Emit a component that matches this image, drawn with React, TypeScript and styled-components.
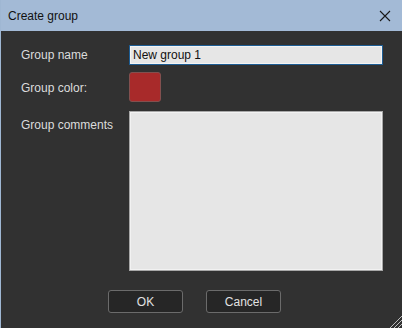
import styled, { createGlobalStyle } from "styled-components";

const Global = createGlobalStyle`
  html, body {
    margin: 0;
    padding: 0;
    background: #313131;
  }
  body {
    font-family: "Liberation Sans", "Noto Sans", sans-serif;
    font-size: 12px;
  }
`;

const Window = styled.div`
  width: 402px;
  height: 328px;
  display: flex;
  flex-direction: column;
  background-color: #313131;
  border-left: 1px solid #9fb7d3;
  box-sizing: border-box;
  position: relative;
  overflow: hidden;
`;

const TitleBar = styled.div`
  height: 31px;
  background-color: #a3bad6;
  display: flex;
  align-items: center;
  justify-content: space-between;
  padding: 0 11px 0 8px;
  color: #111;
  font-size: 12px;
  margin-left: -1px;
`;

const Close = styled.svg`
  width: 12px;
  height: 12px;
`;

const Body = styled.div`
  flex: 1;
  display: grid;
  grid-template-columns: 108px 254px;
  grid-template-rows: 20px 30px 160px;
  row-gap: 8px;
  padding: 14px 0 0 20px;
`;

const Label = styled.div<{ top?: boolean }>`
  color: #dcdcdc;
  font-size: 12px;
  display: flex;
  align-items: ${(p) => (p.top ? "flex-start" : "center")};
  padding-top: ${(p) => (p.top ? "7px" : "0")};
`;

const NameInput = styled.div`
  box-sizing: border-box;
  border: 1px solid #1d5d94;
  box-shadow: inset 0 0 0 1px #f4f4f4;
  background-color: #e6e6e6;
  color: #111;
  font-size: 12px;
  display: flex;
  align-items: center;
  padding-left: 3px;
`;

const Swatch = styled.div`
  width: 32px;
  height: 30px;
  margin-top: -1px;
  box-sizing: border-box;
  background-color: #a82a2a;
  border: 1px solid #82504f;
  border-radius: 3px;
`;

const Comments = styled.div`
  box-sizing: border-box;
  border: 1px solid #a8a8a8;
  box-shadow: inset 0 0 0 1px #f2f2f2;
  background-color: #e6e6e6;
`;

const Footer = styled.div`
  display: flex;
  gap: 23px;
  padding: 0 0 15px 107px;
`;

const Button = styled.div`
  width: 75px;
  height: 23px;
  box-sizing: border-box;
  border: 1px solid #6b6b6b;
  border-radius: 3px;
  background-color: #262626;
  color: #e2e2e2;
  font-size: 12px;
  display: flex;
  align-items: center;
  justify-content: center;
`;

const Grip = styled.svg`
  position: absolute;
  right: 0;
  bottom: 0;
  width: 14px;
  height: 14px;
`;

export default function App() {
  return (
    <>
      <Global />
      <Window>
        <TitleBar>
          <span>Create group</span>
          <Close viewBox="0 0 12 12">
            <path d="M1 1 L11 11 M11 1 L1 11" stroke="#1a1a1a" strokeWidth="1.1" />
          </Close>
        </TitleBar>
        <Body>
          <Label>Group name</Label>
          <NameInput>New group 1</NameInput>
          <Label>Group color:</Label>
          <div>
            <Swatch />
          </div>
          <Label top>Group comments</Label>
          <Comments />
        </Body>
        <Footer>
          <Button>OK</Button>
          <Button>Cancel</Button>
        </Footer>
        <Grip viewBox="0 0 14 14">
          <path d="M14 2 L2 14 M14 6 L6 14 M14 10 L10 14" stroke="#bdbdbd" strokeWidth="1" />
        </Grip>
      </Window>
    </>
  );
}
